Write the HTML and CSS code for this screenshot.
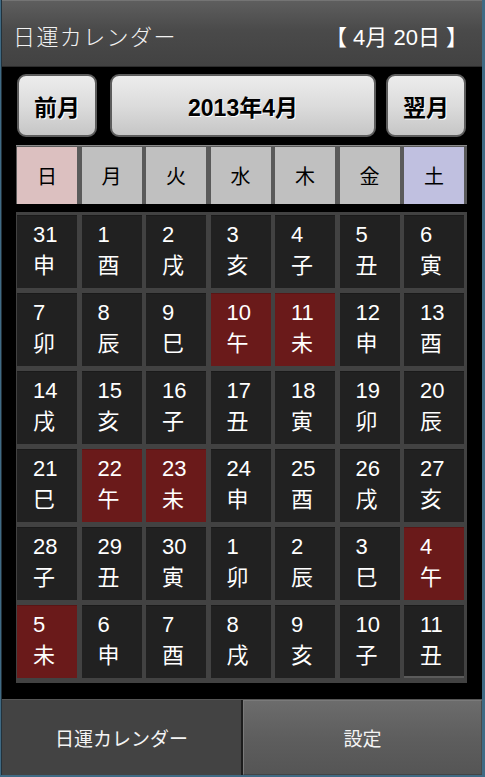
FILE: index.html
```html
<!DOCTYPE html>
<html lang="ja">
<head>
<meta charset="utf-8">
<title>日運カレンダー</title>
<link rel="stylesheet" href="styles.css">
</head>
<body>
<div class="app">
  <header class="titlebar">
    <span class="title">日運カレンダー</span>
    <span class="today">【 4月 20日 】</span>
  </header>
  <main class="content">
    <nav class="monthnav">
      <button class="btn btn-side">前月</button>
      <button class="btn btn-month">2013年4月</button>
      <button class="btn btn-side btn-next">翌月</button>
    </nav>
    <div class="weekdays">
      <div class="wd wd-sun">日</div>
      <div class="wd">月</div>
      <div class="wd">火</div>
      <div class="wd">水</div>
      <div class="wd">木</div>
      <div class="wd">金</div>
      <div class="wd wd-sat">土</div>
    </div>
    <div class="grid">
      <div class="day"><span class="num">31</span><span class="eto">申</span></div>
      <div class="day"><span class="num">1</span><span class="eto">酉</span></div>
      <div class="day"><span class="num">2</span><span class="eto">戌</span></div>
      <div class="day"><span class="num">3</span><span class="eto">亥</span></div>
      <div class="day"><span class="num">4</span><span class="eto">子</span></div>
      <div class="day"><span class="num">5</span><span class="eto">丑</span></div>
      <div class="day"><span class="num">6</span><span class="eto">寅</span></div>

      <div class="day"><span class="num">7</span><span class="eto">卯</span></div>
      <div class="day"><span class="num">8</span><span class="eto">辰</span></div>
      <div class="day"><span class="num">9</span><span class="eto">巳</span></div>
      <div class="day day-bad"><span class="num">10</span><span class="eto">午</span></div>
      <div class="day day-bad"><span class="num">11</span><span class="eto">未</span></div>
      <div class="day"><span class="num">12</span><span class="eto">申</span></div>
      <div class="day"><span class="num">13</span><span class="eto">酉</span></div>

      <div class="day"><span class="num">14</span><span class="eto">戌</span></div>
      <div class="day"><span class="num">15</span><span class="eto">亥</span></div>
      <div class="day"><span class="num">16</span><span class="eto">子</span></div>
      <div class="day"><span class="num">17</span><span class="eto">丑</span></div>
      <div class="day"><span class="num">18</span><span class="eto">寅</span></div>
      <div class="day"><span class="num">19</span><span class="eto">卯</span></div>
      <div class="day"><span class="num">20</span><span class="eto">辰</span></div>

      <div class="day"><span class="num">21</span><span class="eto">巳</span></div>
      <div class="day day-bad"><span class="num">22</span><span class="eto">午</span></div>
      <div class="day day-bad"><span class="num">23</span><span class="eto">未</span></div>
      <div class="day"><span class="num">24</span><span class="eto">申</span></div>
      <div class="day"><span class="num">25</span><span class="eto">酉</span></div>
      <div class="day"><span class="num">26</span><span class="eto">戌</span></div>
      <div class="day"><span class="num">27</span><span class="eto">亥</span></div>

      <div class="day"><span class="num">28</span><span class="eto">子</span></div>
      <div class="day"><span class="num">29</span><span class="eto">丑</span></div>
      <div class="day"><span class="num">30</span><span class="eto">寅</span></div>
      <div class="day"><span class="num">1</span><span class="eto">卯</span></div>
      <div class="day"><span class="num">2</span><span class="eto">辰</span></div>
      <div class="day"><span class="num">3</span><span class="eto">巳</span></div>
      <div class="day day-bad"><span class="num">4</span><span class="eto">午</span></div>

      <div class="day day-bad"><span class="num">5</span><span class="eto">未</span></div>
      <div class="day"><span class="num">6</span><span class="eto">申</span></div>
      <div class="day"><span class="num">7</span><span class="eto">酉</span></div>
      <div class="day"><span class="num">8</span><span class="eto">戌</span></div>
      <div class="day"><span class="num">9</span><span class="eto">亥</span></div>
      <div class="day"><span class="num">10</span><span class="eto">子</span></div>
      <div class="day day-last"><span class="num">11</span><span class="eto">丑</span></div>
    </div>
  </main>
  <footer class="tabs">
    <div class="tab tab-active">日運カレンダー</div>
    <div class="tab tab-settings">設定</div>
  </footer>
</div>
</body>
</html>
```

FILE: styles.css
```css
* {
  box-sizing: border-box;
}

html, body {
  margin: 0;
  padding: 0;
}

body {
  width: 485px;
  height: 777px;
  background: #3f6a84;
  font-family: "Liberation Sans", "Noto Sans CJK JP", sans-serif;
  overflow: hidden;
}

.app {
  width: 481px;
  height: 775px;
  margin-left: 1px;
  border-left: 1px solid #22323c;
  display: flex;
  flex-direction: column;
  background: #000;
}

/* ---------- title bar ---------- */
.titlebar {
  height: 67px;
  flex: none;
  display: flex;
  align-items: center;
  justify-content: space-between;
  padding: 2px 14px 0 11px;
  border-top: 1px solid #747474;
  border-bottom: 1px solid #2c2c2c;
  background: linear-gradient(#5e5e5e, #4a4a4a 45%, #424242);
  color: #f2f2f2;
}

.title {
  font-family: "Noto Sans CJK JP", sans-serif;
  font-weight: 300;
  font-size: 22px;
  letter-spacing: 1.4px;
}

.today {
  font-size: 22px;
  color: #fff;
}

/* ---------- content ---------- */
.content {
  flex: 1;
  background: #000;
  padding: 7px 0 0 0;
}

.monthnav {
  display: flex;
  height: 63px;
  margin-left: 15px;
}

.btn {
  height: 63px;
  border: 2px solid #5c5c5c;
  border-radius: 9px;
  background: linear-gradient(#ececec, #dcdcdc 50%, #c6c6c6);
  font-family: "Liberation Sans", "Noto Sans CJK JP", sans-serif;
  font-weight: bold;
  font-size: 23px;
  color: #000;
  text-shadow: 1px 1px 0 #fff;
  padding: 0;
}

.btn-side {
  width: 80px;
}

.btn-month {
  width: 266px;
  margin-left: 13px;
  margin-right: 10px;
}

/* weekday header */
.weekdays {
  margin: 8px 0 0 14px;
  width: 451px;
  display: grid;
  grid-template-columns: repeat(7, 60px);
  column-gap: 4.5px;
  padding: 1px 3px 0 1px;
  background: #5a5a5a;
  border-top: 1px solid #8a8a8a;
}

.wd {
  height: 57px;
  background: #c0c0c0;
  display: flex;
  align-items: center;
  justify-content: center;
  font-family: "Noto Sans CJK JP", sans-serif;
  font-size: 20px;
  color: #000;
}

.wd-sun {
  background: #dcc0c0;
}

.wd-sat {
  background: #c0c0e0;
}

/* day grid */
.grid {
  margin: 8px 0 0 14px;
  width: 451px;
  display: grid;
  grid-template-columns: repeat(7, 60px);
  grid-auto-rows: 73px;
  column-gap: 4.5px;
  row-gap: 5px;
  padding: 3px 3px 5px 1px;
  background: #424242;
}

.day {
  background: #212121;
  border-top: 1px solid #1a1a1a;
  display: flex;
  flex-direction: column;
  padding: 6px 0 0 16px;
  color: #fff;
}

.day-bad {
  background: #6a1a1a;
  border-top-color: #5a1515;
}

.day-last {
  border-bottom: 2px solid #5a5a5a;
}

.num {
  font-size: 22px;
  line-height: 26px;
}

.eto {
  font-family: "Noto Sans CJK JP", sans-serif;
  font-size: 22px;
  line-height: 30px;
}

/* ---------- bottom tabs ---------- */
.tabs {
  height: 76px;
  flex: none;
  display: flex;
  border-top: 1px solid #555;
}

.tab {
  display: flex;
  align-items: center;
  justify-content: center;
  font-family: "Noto Sans CJK JP", sans-serif;
  font-size: 19px;
  color: #f4f4f4;
}

.tab-active {
  width: 241px;
  background: #434343;
  border-right: 2px solid #1c1c1c;
}

.tab-settings {
  flex: 1;
  background: linear-gradient(#6c6c6c, #5e5e5e 50%, #555);
  border: 1px solid #7a7a7a;
  border-right-color: #4a4a4a;
  border-bottom-color: #444;
}
```
